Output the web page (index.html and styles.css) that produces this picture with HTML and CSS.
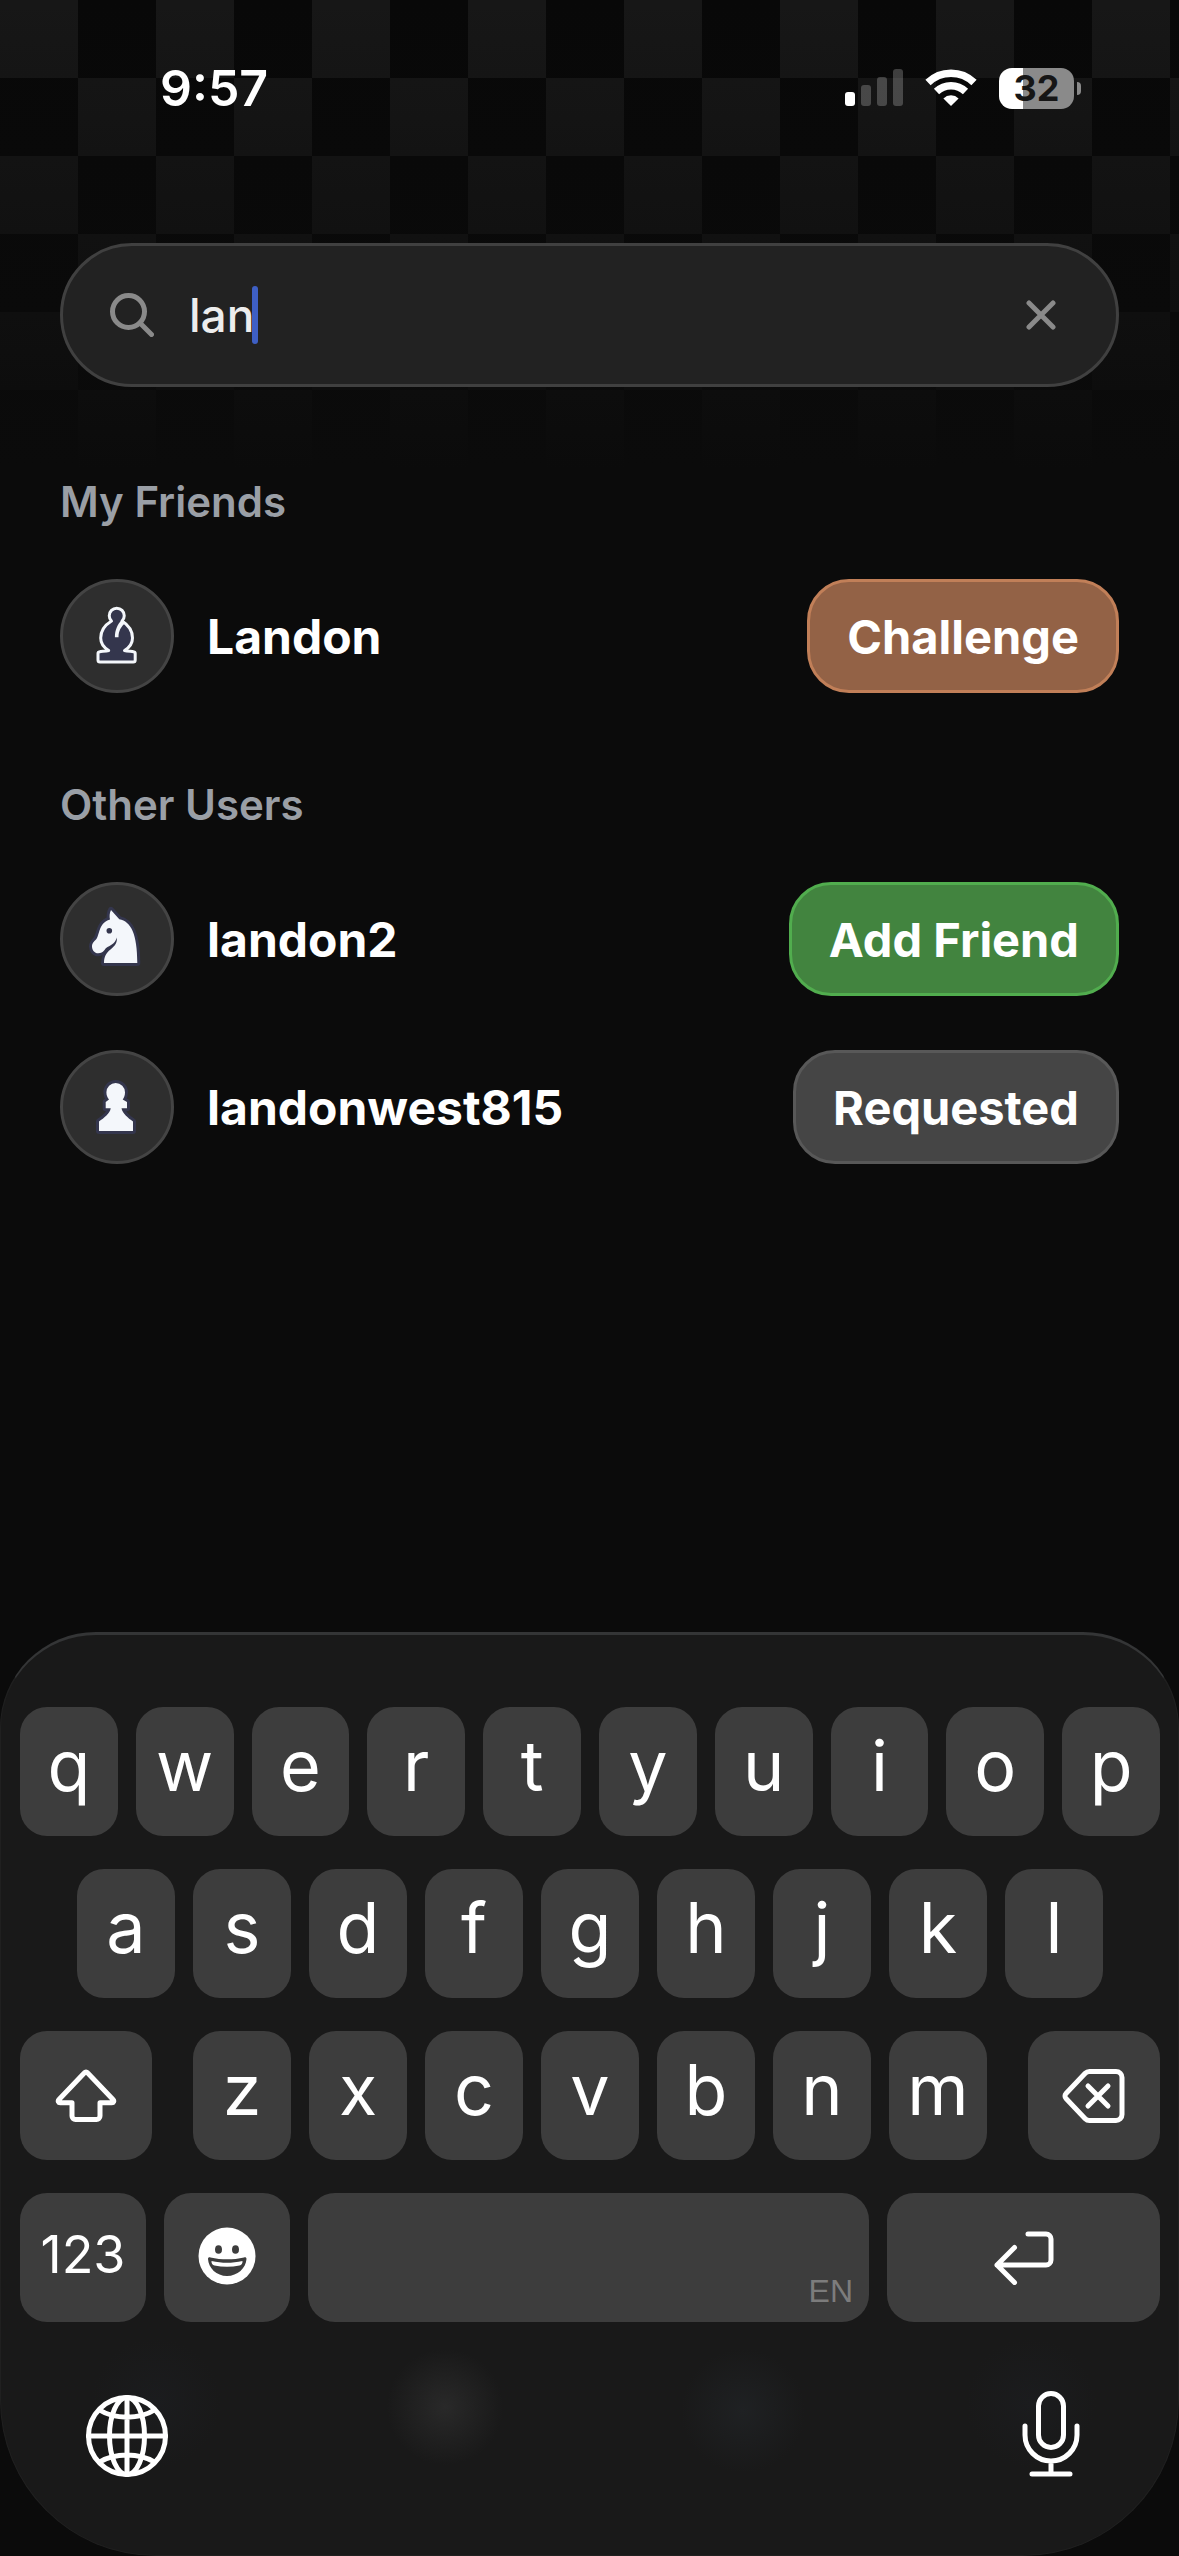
FILE: index.html
```html
<!doctype html>
<html lang="en">
<head>
  <meta charset="utf-8">
  <title>Find Friends</title>
  <meta name="viewport" content="width=device-width,initial-scale=1">
  <link rel="stylesheet" href="styles.css">
</head>

<body>
  <header class="status-bar">
    <time class="clock">9:57</time>
    <div class="status-icons">
      <svg width="58" height="38" viewBox="0 0 58 38" fill="#fff" aria-hidden="true">
        <rect x="0" y="23" width="10" height="14" rx="3"/>
        <rect x="16" y="16" width="10" height="21" rx="3" opacity=".22"/>
        <rect x="32" y="8" width="10" height="29" rx="3" opacity=".22"/>
        <rect x="48" y="0" width="10" height="37" rx="3" opacity=".22"/>
      </svg>
      <svg width="52" height="38" viewBox="0 0 52 38" aria-hidden="true">
        <g fill="none" stroke="#fff" stroke-width="7.500">
          <path d="M3 13.500a33 33 0 0 1 46 0"/>
          <path d="M11.500 22.500a21 21 0 0 1 29 0"/>
        </g>
        <path d="M26 37l-7.600-7.600a11 11 0 0 1 15.200 0z" fill="#fff"/>
      </svg>
      <div class="battery"><span class="battery-level">32</span></div>
    </div>
  </header>

  <main>
    <form class="search" role="search">
      <svg class="search-icon" width="44" height="44" viewBox="0 0 44 44" aria-hidden="true">
        <circle cx="18.500" cy="18.500" r="16"/>
        <path d="M30 30l11.500 11.500"/>
      </svg>
      <div class="search-field">
        <input type="text" id="search" value="lan" aria-label="Search users" autocomplete="off">
        <span class="caret"></span>
      </div>
      <button type="button" class="clear-btn" aria-label="Clear search">
        <svg width="30" height="30" viewBox="0 0 30 30" aria-hidden="true"><path d="M3 3l24 24M27 3L3 27"/></svg>
      </button>
    </form>

    <section class="section">
      <h2>My Friends</h2>
      <ul class="user-list">
        <li>
          <span class="avatar">
            <svg class="piece dark" viewBox="0 0 60 60" aria-hidden="true">
              <path d="M24.500 15a7.500 7.500 0 1 1 10.500 0c6.500 4 10.500 10 10.500 17 0 5.500-3 9.500-8 12.500 3 1 7 .7 9 1.200 1.200.2 1.700.8 1.700 1.800V54c0 1.200-.8 2-2 2H13c-1.200 0-2-.8-2-2v-6.500c0-1 .5-1.600 1.700-1.800 2-.5 6-.2 9-1.200-5-3-8-7-8-12.500 0-7 4.300-13 10.800-17z"/>
              <path class="cut" d="M35 14c2 .5 3 1.500 3.500 3-4.500 3.500-7 8-7 14.200h-3.600C27.900 24 30.500 18 35 14z"/>
            </svg>
          </span>
          <span class="user-name">Landon</span>
          <button type="button" class="btn challenge">Challenge</button>
        </li>
      </ul>
    </section>

    <section class="section">
      <h2>Other Users</h2>
      <ul class="user-list">
        <li>
          <span class="avatar">
            <svg class="piece light" viewBox="0 0 60 60" aria-hidden="true">
              <path d="M24 1l8.300 9.300C44 12.500 50.300 25 50.300 54H17c0-6 2-10 6.500-13.500C28.500 36.500 30.500 33 29.700 28.500 29 33 25 36 20.500 38c-3 1.500-3.500 6.300-9.300 6.300C7.500 44.300 5 41 5 37.500c0-4 3-5.500 4.700-8C12 26 12 17.500 18 13c1.500-1.200 3-2 5-2.500-.7-3-.5-6.500 1-9.500z"/>
              <circle class="eye" cx="22.300" cy="21.700" r="2.800"/>
            </svg>
          </span>
          <span class="user-name">landon2</span>
          <button type="button" class="btn add">Add Friend</button>
        </li>
        <li>
          <span class="avatar">
            <svg class="piece light" viewBox="0 0 60 60" aria-hidden="true">
              <path d="M28.700 6a9.300 9.300 0 0 0-9.300 9.300c0 3.200 1 5.200 2.600 7.200l-3.300 2.500v6.300h5C23 36.500 17 41 12 44.500V54h34v-9.500C41 41 35.500 36.500 34.500 31.300H40V25l-4.300-2.500c1.500-2 2.300-4 2.300-7.200A9.300 9.300 0 0 0 28.700 6z"/>
            </svg>
          </span>
          <span class="user-name">landonwest815</span>
          <button type="button" class="btn requested">Requested</button>
        </li>
      </ul>
    </section>
  </main>

  <div class="keyboard">
    <div class="key-row">
      <button class="key">q</button>
      <button class="key">w</button>
      <button class="key">e</button>
      <button class="key">r</button>
      <button class="key">t</button>
      <button class="key">y</button>
      <button class="key">u</button>
      <button class="key">i</button>
      <button class="key">o</button>
      <button class="key">p</button>
    </div>
    <div class="key-row home-row">
      <button class="key">a</button>
      <button class="key">s</button>
      <button class="key">d</button>
      <button class="key">f</button>
      <button class="key">g</button>
      <button class="key">h</button>
      <button class="key">j</button>
      <button class="key">k</button>
      <button class="key">l</button>
    </div>
    <div class="key-row shift-row">
      <button class="key icon-key" aria-label="Shift">
        <svg width="62" height="54" viewBox="0 0 62 54" aria-hidden="true">
          <path d="M29.500 3.700a2 2 0 0 1 3 0L58 30.500c1.500 1.600.6 3.300-1.200 3.300H45V47a3.500 3.500 0 0 1-3.500 3.500h-21A3.500 3.500 0 0 1 17 47V33.800H5.200C3.400 33.800 2.500 32.100 4 30.500z"/>
        </svg>
      </button>
      <div class="key-row letters">
        <button class="key">z</button>
        <button class="key">x</button>
        <button class="key">c</button>
        <button class="key">v</button>
        <button class="key">b</button>
        <button class="key">n</button>
        <button class="key">m</button>
      </div>
      <button class="key icon-key" aria-label="Delete">
        <svg width="64" height="54" viewBox="0 0 64 54" aria-hidden="true">
          <path d="M27.500 2.500H54a6 6 0 0 1 6 6v37a6 6 0 0 1-6 6H27.500a6 6 0 0 1-4.300-1.800L4 29.500a3.600 3.600 0 0 1 0-5L23.200 4.300A6 6 0 0 1 27.500 2.500z"/>
          <path d="M26 17l20 20M46 17L26 37"/>
        </svg>
      </button>
    </div>
    <div class="key-row bottom-row">
      <button class="key num-key">123</button>
      <button class="key icon-key emoji-key" aria-label="Emoji">
        <svg width="58" height="58" viewBox="0 0 58 58" aria-hidden="true">
          <circle class="face" cx="29" cy="29" r="28.500"/>
          <g class="hole">
            <ellipse cx="20.500" cy="22.500" rx="3.500" ry="4.300"/>
            <ellipse cx="37.500" cy="22.500" rx="3.500" ry="4.300"/>
            <path d="M10 32c0-1.500 1-2 2.500-1.600 11 2.600 22.500 2.600 33.500 0 1.500-.4 2.500.1 2.500 1.600C48 41 39.500 49 29 49S10.500 41 10 32z"/>
          </g>
          <path class="face" d="M13.500 34c10.500 2.400 20.500 2.400 31 0 .2 2.500-1 4-3 4.500-8 1.700-17 1.700-25 0-2-.5-3.200-2-3-4.500z"/>
        </svg>
      </button>
      <button class="key space-key" aria-label="Space"><span>EN</span></button>
      <button class="key icon-key" aria-label="Return">
        <svg width="60" height="54" viewBox="0 0 60 54" aria-hidden="true">
          <path d="M34 3h18a5 5 0 0 1 5 5v21a5 5 0 0 1-5 5H3M20.500 16.500L3 34l17.500 17.500"/>
        </svg>
      </button>
    </div>
    <div class="keyboard-footer">
      <button class="plain-key" aria-label="Next keyboard">
        <svg width="82" height="82" viewBox="0 0 82 82" aria-hidden="true">
          <circle cx="41" cy="41" r="38.500"/>
          <ellipse cx="41" cy="41" rx="17.500" ry="38.500"/>
          <path d="M41 2.500v77M2.500 41h77M13.500 15c15 9.500 40 9.500 55 0M13.500 67c15-9.500 40-9.500 55 0"/>
        </svg>
      </button>
      <button class="plain-key" aria-label="Dictate">
        <svg width="58" height="86" viewBox="0 0 58 86" aria-hidden="true">
          <rect x="16.500" y="2.500" width="25" height="54" rx="12.500"/>
          <path d="M3 35v9a26 26 0 0 0 52 0v-9M29 70v13M10 83h38"/>
        </svg>
      </button>
    </div>
  </div>
</body>
</html>
```

FILE: styles.css
```css
:root {
  --bg:          #0b0b0b;
  --checker:     #171717;
  --text-main:   #fff;
  --text-muted:  #9a9fa6;
  --key-bg:      #3d3d3d;
  --keyboard-bg: #191919;
  --side:        60px;
}
*, *::before, *::after { box-sizing: border-box; }
body {
  margin: 0;
  min-height: 100vh;
  display: flex;
  flex-direction: column;
  /* checkerboard that fades out down the page */
  background:
    linear-gradient(rgba(11,11,11,0), var(--bg) 470px),
    repeating-conic-gradient(#080808 0 25%, var(--checker) 0 50%) 0 0 / 156px 156px;
  color: var(--text-main);
  font-family: Inter, "Liberation Sans", sans-serif;
}
button, input {
  font: inherit;
  color: inherit;
  border: none;
  background: none;
  padding: 0;
  margin: 0;
}
svg { display: block; }

/* ── status bar ───────────────────────────────────────── */
.status-bar {
  display: flex;
  justify-content: space-between;
  align-items: center;
  height: 176px;
  padding: 0 105px 0 160px;
}
.clock { font-size: 50px; font-weight: 600; }
.status-icons {
  display: flex;
  align-items: center;
  gap: 22px;
}
.battery {
  position: relative;
  width: 75px;
  height: 41px;
  border-radius: 13px;
  background: linear-gradient(90deg, #fff 24px, #8a8a8a 24px);
  color: #161616;
  font-size: 36px;
  font-weight: 700;
  line-height: 41px;
  text-align: center;
}
.battery::after {
  content: "";
  position: absolute;
  left: 78px;
  top: 14px;
  width: 4px;
  height: 13px;
  border-radius: 0 4px 4px 0;
  background: #8a8a8a;
}

/* ── search ───────────────────────────────────────────── */
main { padding: 67px var(--side) 0; }
.search {
  display: flex;
  align-items: center;
  height: 144px;
  padding: 0 60px 0 47px;
  margin-bottom: 90px;
  border: 3px solid #404040;
  border-radius: 72px;
  background: rgba(36,36,36,.95);
}
.search-icon, .clear-btn svg {
  fill: none;
  stroke: #8a8a8a;
  stroke-width: 5;
  stroke-linecap: round;
}
.search-field {
  flex: 1;
  display: flex;
  align-items: center;
  padding-left: 35px;
}
.search-field input {
  field-sizing: content;
  font-size: 46px;
  font-weight: 500;
  color: #ededed;
  outline: none;
  caret-color: transparent;
}
.caret {
  width: 6px;
  height: 58px;
  margin-left: -2px;
  border-radius: 3px;
  background: #3e5fc4;
}

/* ── user lists ───────────────────────────────────────── */
.section { margin-bottom: 87px; }
h2 {
  margin: 0 0 52px;
  font-size: 42px;
  font-weight: 600;
  line-height: 50px;
  color: var(--text-muted);
}
.user-list {
  list-style: none;
  margin: 0;
  padding: 0;
  display: flex;
  flex-direction: column;
  gap: 54px;
}
.user-list li {
  display: flex;
  align-items: center;
}
.avatar {
  display: grid;
  place-items: center;
  width: 114px;
  height: 114px;
  border: 3px solid #444;
  border-radius: 50%;
  background: #2e2e2e;
}
.piece {
  width: 60px;
  height: 60px;
  overflow: visible;
  stroke-linejoin: round;
}
.piece.dark { fill: #34364d; stroke: #f4f7fb; stroke-width: 3; }
/* outline sits behind the fill */
.piece.light { fill: #f4f7fb; stroke: #34364d; stroke-width: 6; paint-order: stroke; }
.piece .cut { fill: #f4f7fb; stroke: none; }
.piece .eye { fill: #34364d; stroke: none; }
.user-name {
  flex: 1;
  padding-left: 33px;
  font-size: 48px;
  font-weight: 700;
}
.btn {
  height: 114px;
  padding: 0 37px;
  border: 3px solid;
  border-radius: 42px;
  font-size: 47px;
  font-weight: 700;
}
.challenge { background: #936246; border-color: #c17f58; }
.add { background: #42843f; border-color: #51ad4e; }
.requested { background: #454545; border-color: #585858; }

/* ── keyboard ─────────────────────────────────────────── */
.keyboard {
  margin-top: auto;
  display: flex;
  flex-direction: column;
  gap: 33px;
  padding: 72px 18px 78px 19px;
  border: 1px solid #202020;
  border-top: 3px solid #343536;
  border-radius: 96px 96px 156px 156px;
  background:
    radial-gradient(circle at 444px 772px, #292929, transparent 58px),
    radial-gradient(circle at 742px 776px, #1f2123, transparent 62px),
    radial-gradient(circle at 155px 768px, #1b1c1e, transparent 65px),
    radial-gradient(circle at 1030px 768px, #1b1c1e, transparent 65px),
    var(--keyboard-bg);
}
.key-row { display: flex; gap: 18px; }
.home-row { padding: 0 57px; }
.letters { flex: 1; }
.shift-row { gap: 41px; }
.shift-row > .icon-key { flex: 0 0 132px; }
.key {
  flex: 1;
  height: 129px;
  padding-bottom: 12px;
  border-radius: 27px;
  background: var(--key-bg);
  font-size: 70px;
}
.icon-key {
  display: grid;
  place-items: center;
  padding: 0;
}
.icon-key svg, .plain-key svg {
  fill: none;
  stroke: #fff;
  stroke-width: 5;
  stroke-linecap: round;
  stroke-linejoin: round;
}
.icon-key .face { fill: #fff; stroke: none; }
.icon-key .hole { fill: var(--key-bg); stroke: none; }
.bottom-row {
  display: grid;
  grid-template-columns: 126fr 126fr 561fr 273fr;
}
.emoji-key { padding-bottom: 4px; }
.num-key { font-size: 52px; padding-bottom: 6px; }
.space-key {
  display: flex;
  justify-content: flex-end;
  align-items: flex-end;
  padding: 0 16px 12px;
  font-family: "Liberation Sans Narrow", "Liberation Sans", sans-serif;
  font-size: 32px;
  color: #7c7c7c;
}
.keyboard-footer {
  display: flex;
  justify-content: space-between;
  align-items: flex-end;
  padding: 36px 80px 0 66px;
}
```
